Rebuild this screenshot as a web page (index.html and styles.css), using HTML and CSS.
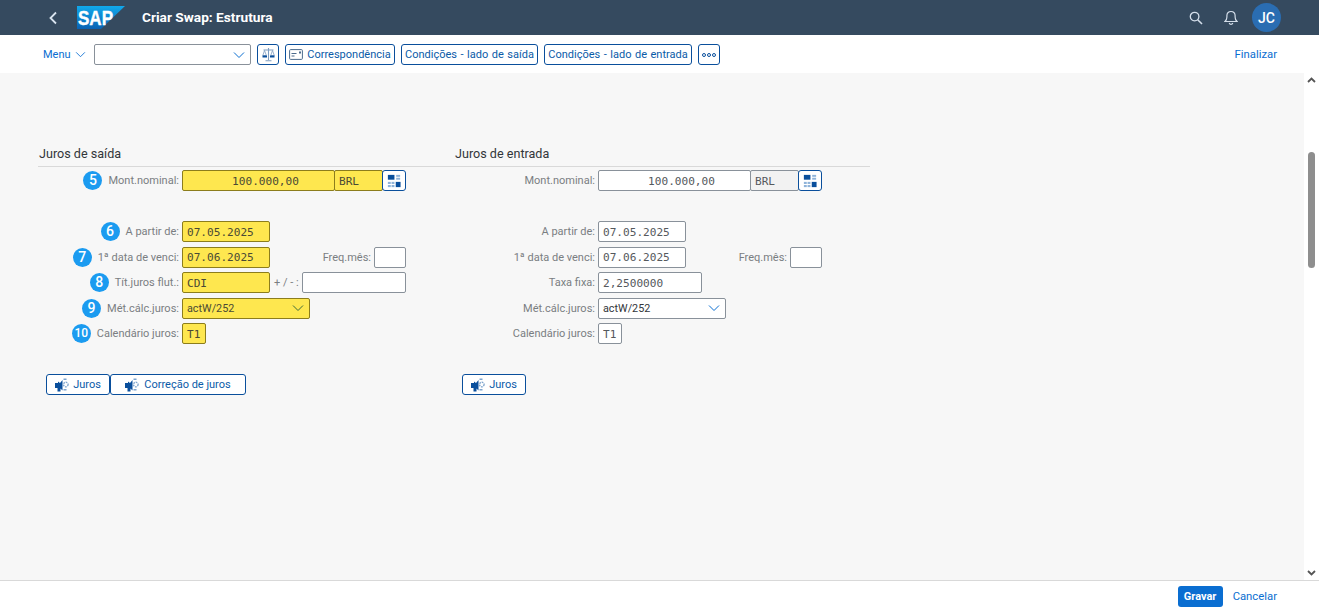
FILE: index.html
```html
<!DOCTYPE html>
<html lang="pt">
<head>
<meta charset="utf-8">
<title>Criar Swap: Estrutura</title>
<link rel="stylesheet" href="styles.css">
</head>
<body>
<svg class="defs" width="0" height="0" aria-hidden="true">
  <defs>
    <symbol id="chev" viewBox="0 0 12 8"><path d="M1 1.500 6 6.500 11 1.500" fill="none" stroke="currentColor" stroke-width="1"/></symbol>
    <symbol id="vh" viewBox="0 0 16 16">
      <rect x="1" y="1" width="7.500" height="5.500" fill="#0a4f9c"/><rect x="10.500" y="1" width="4.500" height="2.200" fill="#8fb3d9"/><rect x="10.500" y="4.300" width="4.500" height="2.200" fill="#8fb3d9"/>
      <rect x="1" y="9" width="3.300" height="2.400" fill="#8fb3d9"/><rect x="5.200" y="9" width="3.300" height="2.400" fill="#8fb3d9"/><rect x="1" y="12.600" width="3.300" height="2.400" fill="#8fb3d9"/><rect x="5.200" y="12.600" width="3.300" height="2.400" fill="#8fb3d9"/>
      <rect x="10" y="9" width="5.500" height="6" fill="#0a4f9c"/>
    </symbol>
    <symbol id="int" viewBox="0 0 14 14">
      <path d="M0 5 3 5 3 3.500 5 5 7.500 2 7.500 12.500 5.500 10.500 5.500 13.500 2.500 13.500 2.500 10 0 10Z" fill="#0a4f9c"/>
      <circle cx="10.800" cy="6.500" r="2.300" fill="none" stroke="#7da4cd" stroke-width="1.300" stroke-dasharray="1.600 .8"/>
      <rect x="8.500" y="0.500" width="3" height="1.500" fill="#7da4cd"/><rect x="8.500" y="11" width="3" height="1.500" fill="#7da4cd"/>
    </symbol>
  </defs>
</svg>

<header class="shell">
  <svg class="back" width="10" height="14" viewBox="0 0 10 14"><path d="M8 1.500 2.500 7 8 12.500" fill="none" stroke="#d9e4ef" stroke-width="1.800"/></svg>
  <svg class="logo" width="48" height="23" viewBox="0 0 48 23">
    <defs><linearGradient id="sapg" x1="0" y1="0" x2="0" y2="1"><stop offset="0" stop-color="#11a9ec"/><stop offset="1" stop-color="#0a62b3"/></linearGradient></defs>
    <path d="M0 0H48L24 23H0Z" fill="url(#sapg)"/>
    <text class="logo-text" x="1" y="19" textLength="35" lengthAdjust="spacingAndGlyphs">SAP</text>
  </svg>
  <div class="title">Criar Swap: Estrutura</div>
  <div class="shell-actions">
    <svg width="14" height="14" viewBox="0 0 14 14"><circle cx="5.600" cy="5.600" r="4.300" fill="none" stroke="#d4deea" stroke-width="1.300"/><path d="M8.700 8.700 13 13" stroke="#d4deea" stroke-width="1.600"/></svg>
    <svg width="14" height="15" viewBox="0 0 14 15"><path d="M1 11.500h12c-1.400-1.200-1.900-2.400-1.900-4.500V5.600C11.100 3 9.300 1.500 7 1.500S2.900 3 2.900 5.600V7C2.900 9.100 2.400 10.300 1 11.500Z" fill="none" stroke="#d4deea" stroke-width="1.200"/><path d="M5.200 13a1.900 1.900 0 0 0 3.600 0" fill="none" stroke="#d4deea" stroke-width="1.200"/></svg>
    <div class="avatar">JC</div>
  </div>
</header>

<nav class="toolbar">
  <span class="menu">Menu <svg class="chev" width="11" height="7"><use href="#chev"/></svg></span>
  <div class="combo toolbar-combo"><svg class="chev" width="12" height="8"><use href="#chev"/></svg></div>
  <button class="btn icon-btn" aria-label="Balança">
    <svg width="13" height="15" viewBox="0 0 13 15"><path d="M6.500 1V13M3.500 13.800h6M1.500 3h10" fill="none" stroke="#7d9cc0" stroke-width="1.100"/><path d="M2.500 3.500 .8 8.500h3.600ZM10.500 3.500 8.700 8.500h3.600Z" fill="none" stroke="#7d9cc0" stroke-width=".8"/><rect x=".5" y="8.500" width="4.500" height="2" fill="#0a4f9c"/><rect x="8" y="8.500" width="4.500" height="2" fill="#0a4f9c"/></svg>
  </button>
  <button class="btn w-corr">
    <svg width="14" height="11" viewBox="0 0 14 11"><rect x=".6" y=".6" width="12.800" height="9.800" rx="1" fill="none" stroke="#4c6b8c" stroke-width="1"/><path d="M2.500 4.500h5M2.500 7h3" stroke="#4c6b8c"/><path d="M10 2.500h2v2h-2Z" fill="#4c6b8c"/></svg>
    Correspondência
  </button>
  <button class="btn w-saida">Condições - lado de saída</button>
  <button class="btn w-entrada">Condições - lado de entrada</button>
  <button class="btn icon-btn more" aria-label="Mais"><i></i><i></i><i></i></button>
  <a class="link finalizar">Finalizar</a>
</nav>

<div class="body-row">
  <main class="content">
    <section class="form">
      <div class="titles">
        <h2>Juros de saída</h2>
        <h2>Juros de entrada</h2>
      </div>
      <div class="panels">
        <div class="panel">
          <div class="label"><b class="badge">5</b>Mont.nominal:</div>
          <div class="cells">
            <input class="f req amount" value="100.000,00" readonly>
            <input class="f req cur" value="BRL" readonly>
            <button class="btn vh" aria-label="Ajuda"><svg width="14" height="14"><use href="#vh"/></svg></button>
          </div>
          <div class="label blank"></div><div class="cells"></div>
          <div class="label"><b class="badge">6</b>A partir de:</div>
          <div class="cells"><input class="f req date" value="07.05.2025" readonly></div>
          <div class="label"><b class="badge">7</b>1ª data de venci:</div>
          <div class="cells"><input class="f req date" value="07.06.2025" readonly><span class="sub freq">Freq.mês:</span><input class="f tiny" readonly></div>
          <div class="label"><b class="badge">8</b>Tít.juros flut.:</div>
          <div class="cells"><input class="f req date" value="CDI" readonly><span class="sub pm">+ / - :</span><input class="f rate" readonly></div>
          <div class="label"><b class="badge">9</b>Mét.cálc.juros:</div>
          <div class="cells"><div class="combo req method">actW/252<svg class="chev" width="12" height="8"><use href="#chev"/></svg></div></div>
          <div class="label"><b class="badge small">10</b>Calendário juros:</div>
          <div class="cells"><input class="f req cal" value="T1" readonly></div>
          <div class="label blank"></div><div class="cells"></div>
          <div class="actions">
            <button class="btn w-juros"><svg width="14" height="14"><use href="#int"/></svg>Juros</button><button class="btn w-correcao"><svg width="14" height="14"><use href="#int"/></svg>Correção de juros</button>
          </div>
        </div>

        <div class="panel">
          <div class="label">Mont.nominal:</div>
          <div class="cells">
            <input class="f amount" value="100.000,00" readonly>
            <input class="f cur off" value="BRL" readonly>
            <button class="btn vh" aria-label="Ajuda"><svg width="14" height="14"><use href="#vh"/></svg></button>
          </div>
          <div class="label blank"></div><div class="cells"></div>
          <div class="label">A partir de:</div>
          <div class="cells"><input class="f date" value="07.05.2025" readonly></div>
          <div class="label">1ª data de venci:</div>
          <div class="cells"><input class="f date" value="07.06.2025" readonly><span class="sub freq">Freq.mês:</span><input class="f tiny" readonly></div>
          <div class="label">Taxa fixa:</div>
          <div class="cells"><input class="f rate" value="2,2500000" readonly></div>
          <div class="label">Mét.cálc.juros:</div>
          <div class="cells"><div class="combo method">actW/252<svg class="chev" width="12" height="8"><use href="#chev"/></svg></div></div>
          <div class="label">Calendário juros:</div>
          <div class="cells"><input class="f cal" value="T1" readonly></div>
          <div class="label blank"></div><div class="cells"></div>
          <div class="actions">
            <button class="btn w-juros"><svg width="14" height="14"><use href="#int"/></svg>Juros</button>
          </div>
        </div>
      </div>
    </section>
  </main>
  <aside class="scrollbar">
    <svg width="9" height="6" viewBox="0 0 9 6"><path d="M1 5 4.500 1.500 8 5" fill="none" stroke="#555" stroke-width="1.800"/></svg>
    <div class="track"><div class="thumb"></div></div>
    <svg width="9" height="6" viewBox="0 0 9 6"><path d="M1 1 4.500 4.500 8 1" fill="none" stroke="#555" stroke-width="1.800"/></svg>
  </aside>
</div>

<footer class="footer">
  <button class="primary">Gravar</button>
  <a class="link">Cancelar</a>
</footer>
</body>
</html>
```

FILE: styles.css
```css
* { box-sizing: border-box; }
html, body { margin: 0; height: 100%; }
body {
  width: 1319px;
  height: 612px;
  overflow: hidden;
  display: flex;
  flex-direction: column;
  font-family: Roboto, "Liberation Sans", sans-serif;
  font-size: 11px;
  color: #32363a;
  background: #fff;
}
.defs { position: absolute; }

.shell {
  flex: 0 0 35px;
  display: flex;
  align-items: center;
  background: #354a5f;
  padding-left: 48px;
  padding-right: 38px;
}
.logo { margin-left: 19px; }
.logo-text {
  font-family: "Liberation Sans", sans-serif;
  font-weight: 700;
  font-size: 20px;
  fill: #fff;
  stroke: #fff;
  stroke-width: .4px;
}
.title {
  margin-left: 17px;
  margin-bottom: 2px;
  color: #fff;
  font-size: 13.7px;
  font-weight: 700;
}
.shell-actions {
  margin-left: auto;
  display: flex;
  align-items: center;
  gap: 21px;
}
.avatar {
  width: 29px;
  height: 29px;
  margin-left: -7px;
  border-radius: 50%;
  background: #2a6db2;
  color: #fff;
  font-size: 14px;
  font-weight: 500;
  display: flex;
  align-items: center;
  justify-content: center;
}

.toolbar {
  flex: 0 0 38px;
  display: flex;
  align-items: flex-start;
  padding: 9px 42px 0 43px;
  background: #fff;
}
.menu {
  display: flex;
  align-items: center;
  gap: 4px;
  height: 21px;
  width: 51px;
  color: #0a6ed1;
}
.chev { color: #0a6ed1; flex: none; }
.btn {
  display: inline-flex;
  align-items: center;
  justify-content: center;
  height: 21px;
  padding: 0;
  background: #fff;
  border: 1px solid #0a4f9c;
  border-radius: 3px;
  color: #0a5ba8;
  font: inherit;
  white-space: nowrap;
}
.combo {
  display: flex;
  align-items: center;
  justify-content: space-between;
  height: 21px;
  padding: 0 5px 0 4px;
  background: #fff;
  border: 1px solid #89919a;
  border-radius: 2px;
  color: #32363a;
}
.toolbar-combo { width: 157px; margin-right: 6px; justify-content: flex-end; }
.icon-btn { width: 22px; }
.w-corr { width: 110px; margin-left: 6px; gap: 4px; }
.w-saida { width: 137px; margin-left: 6px; word-spacing: .8px; }
.w-entrada { width: 148px; margin-left: 6px; word-spacing: .8px; }
.more { margin-left: 6px; gap: 1px; }
.more i { width: 4px; height: 4px; border: 1px solid #0a4f9c; border-radius: 50%; }
.link { color: #0a6ed1; font-size: 11.3px; }
.finalizar { margin-left: auto; line-height: 21px; }

.body-row { flex: 1; display: flex; min-height: 0; }
.content { flex: 1; background: #f7f7f7; padding: 71px 0 0 38px; }
.form { width: 832px; }
.titles {
  display: flex;
  height: 23px;
  border-bottom: 1px solid #d9d9d9;
}
.titles h2 {
  width: 416px;
  margin: 0;
  padding-left: 1px;
  font-size: 12.6px;
  font-weight: 400;
  line-height: 20px;
  color: #32363a;
}
.panels { display: flex; padding-top: 3px; }
.panel {
  width: 416px;
  display: grid;
  grid-template-columns: 141px 1fr;
  grid-auto-rows: 25.5px;
  column-gap: 3px;
}
.label {
  display: flex;
  justify-content: flex-end;
  align-items: flex-start;
  gap: 6px;
  height: 21px;
  line-height: 21px;
  color: #7a7e82;
  white-space: nowrap;
}
.badge {
  flex: none;
  width: 19px;
  height: 19px;
  border-radius: 50%;
  background: #1b9bf0;
  color: #fff;
  font-weight: 500;
  font-size: 14px;
  line-height: 19px;
  text-align: center;
  margin-top: 1px;
}
.badge.small { font-size: 12px; }
.cells { display: flex; align-items: flex-start; width: 224px; }
.f {
  height: 21px;
  padding: 1px 4px 0;
  background: #fff;
  border: 1px solid #89919a;
  border-radius: 2px;
  outline: 0;
  font-family: "DejaVu Sans Mono", monospace;
  font-size: 11.1px;
  color: #55595d;
}
.req { background: #fee74f; border-color: #8c7d1c; color: #4a4a35; }
.off { background: #f2f2f2; }
.amount { width: 153px; padding-left: 18px; text-align: center; }
.cur { width: 49px; margin-left: -1px; }
.vh { width: 24px; margin-left: -1px; }
.date { width: 88px; }
.tiny { width: 32px; }
.rate { width: 104px; }
.cal { width: 24px; }
.method { width: 128px; font-size: 10.8px; }
.req .chev, .req.method .chev { color: #3d6b3a; }
.sub { color: #7a7e82; line-height: 21px; white-space: nowrap; }
.freq { margin-left: auto; margin-right: 3px; }
.pm { width: 32px; padding-left: 4px; }
.actions { grid-column: 1 / -1; display: flex; padding-left: 8px; }
.w-juros { width: 64px; gap: 4px; }
.w-correcao { width: 136px; gap: 5px; }

.scrollbar {
  flex: 0 0 15px;
  display: flex;
  flex-direction: column;
  align-items: center;
  padding: 4px 0 4px;
  background: #fff;
}
.track { flex: 1; width: 100%; padding-top: 69px; display: flex; justify-content: center; }
.thumb { width: 7px; height: 116px; border-radius: 4px; background: #8e8e8e; }

.footer {
  flex: 0 0 32px;
  display: flex;
  align-items: flex-start;
  justify-content: flex-end;
  gap: 10px;
  padding: 5px 42px 0 0;
  background: #fff;
  border-top: 1px solid #d9d9d9;
  line-height: 21px;
}
.primary {
  width: 45px;
  height: 21px;
  padding: 0;
  border: 0;
  border-radius: 3px;
  background: #0a6ed1;
  color: #fff;
  font: inherit;
  font-weight: 700;
}
```
